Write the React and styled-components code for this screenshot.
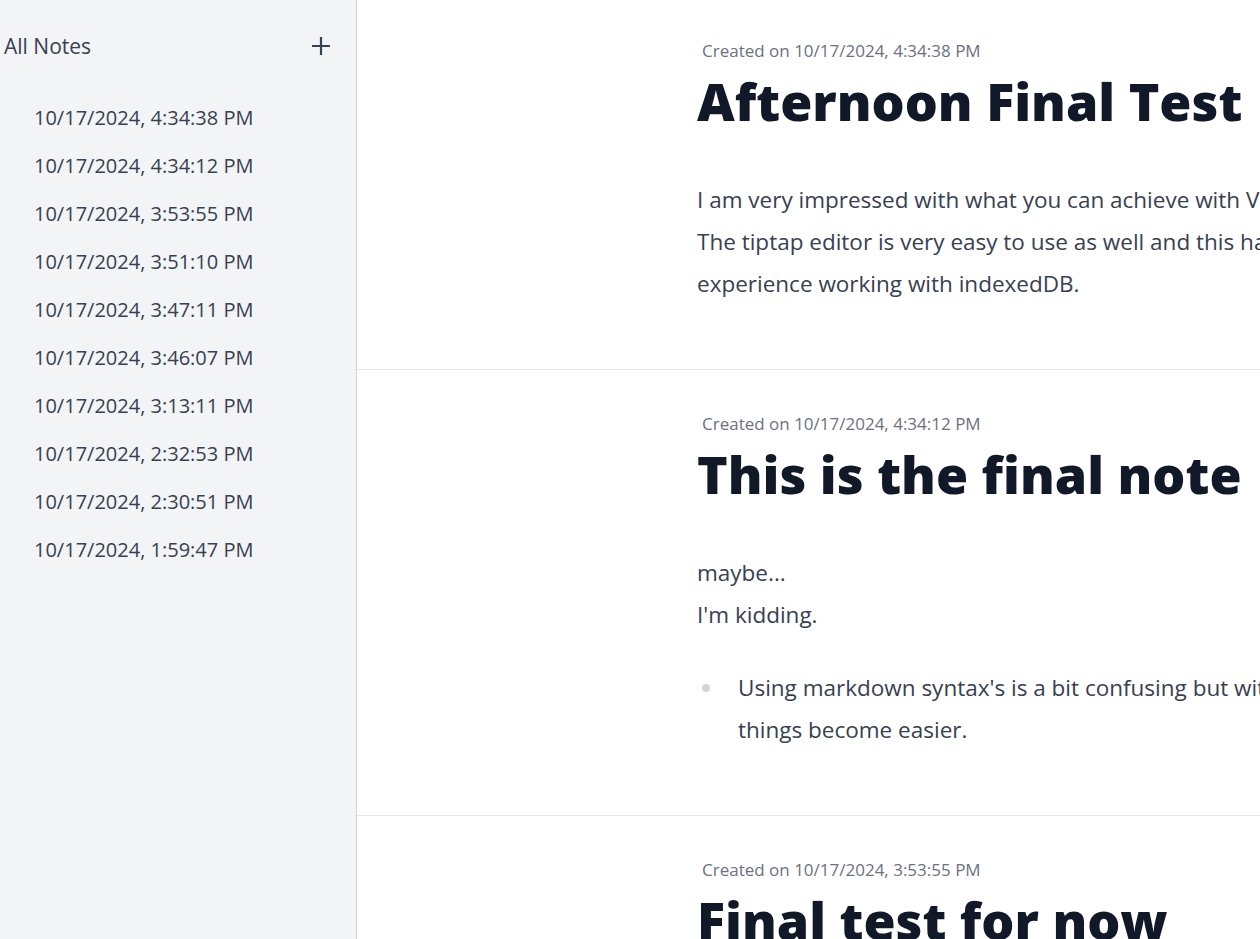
import React from "react";
import styled, { createGlobalStyle } from "styled-components";

const Global = createGlobalStyle`
  html, body { margin: 0; padding: 0; height: 100%; overflow: hidden; }
  body { font-family: "Open Sans", "Noto Sans", sans-serif; background: #fff; }
  #root { height: 100%; }
  * { box-sizing: border-box; }
`;

const Layout = styled.div`
  display: flex;
  height: 100vh;
  width: 100%;
`;

const Sidebar = styled.aside`
  flex: 0 0 357px;
  background: #f3f4f6;
  border-right: 1px solid #d1d5db;
  padding: 0 24px 0 4px;
`;

const SidebarHeader = styled.div`
  display: flex;
  align-items: center;
  justify-content: space-between;
  height: 92px;
`;

const SidebarTitle = styled.h2`
  margin: 0;
  font-size: 21px;
  font-weight: 500;
  color: #374151;
`;

const AddButton = styled.button`
  border: 0;
  background: none;
  padding: 0;
  width: 22px;
  height: 22px;
  display: flex;
  align-items: center;
  justify-content: center;
  color: #374151;
  cursor: pointer;
`;

const NoteList = styled.ul`
  list-style: none;
  margin: 2px 0 0;
  padding: 0 0 0 30px;
  display: flex;
  flex-direction: column;
`;

const NoteItem = styled.li`
  font-size: 20px;
  line-height: 48px;
  color: #374151;
`;

const Main = styled.main`
  flex: 1;
  overflow: hidden;
  min-width: 0;
`;

const Article = styled.article`
  border-bottom: 1px solid #e5e7eb;
  padding: 42px 0 64px 340px;
  &:first-child {
    padding-top: 39px;
  }
`;

const Meta = styled.div`
  font-size: 17px;
  line-height: 24px;
  color: #6b7280;
  padding-left: 5px;
`;

const Title = styled.h1`
  margin: 9px 0 0;
  font-size: 52px;
  line-height: 57px;
  font-weight: 800;
  color: #111827;
  white-space: nowrap;
`;

const Body = styled.div`
  margin-top: 50px;
  font-size: 22.5px;
  line-height: 42px;
  color: #374151;
  white-space: nowrap;
`;

const Para = styled.p`
  margin: 0;
`;

const Line = styled.span`
  display: block;
`;

const Bullets = styled.ul`
  margin: 31px 0 0;
  padding: 0 0 0 41px;
  list-style: none;
`;

const Bullet = styled.li`
  position: relative;
  &::before {
    content: "";
    position: absolute;
    left: -36px;
    top: 17px;
    width: 8px;
    height: 8px;
    border-radius: 50%;
    background: #d1d5db;
  }
`;

const notes = [
  "10/17/2024, 4:34:38 PM",
  "10/17/2024, 4:34:12 PM",
  "10/17/2024, 3:53:55 PM",
  "10/17/2024, 3:51:10 PM",
  "10/17/2024, 3:47:11 PM",
  "10/17/2024, 3:46:07 PM",
  "10/17/2024, 3:13:11 PM",
  "10/17/2024, 2:32:53 PM",
  "10/17/2024, 2:30:51 PM",
  "10/17/2024, 1:59:47 PM",
];

export default function App() {
  return (
    <>
      <Global />
      <Layout>
        <Sidebar>
          <SidebarHeader>
            <SidebarTitle>All Notes</SidebarTitle>
            <AddButton aria-label="New note">
              <svg width="20" height="20" viewBox="0 0 20 20" fill="none" stroke="currentColor" strokeWidth="2.2">
                <path d="M10 1v18M1 10h18" />
              </svg>
            </AddButton>
          </SidebarHeader>
          <NoteList>
            {notes.map((n) => (
              <NoteItem key={n}>{n}</NoteItem>
            ))}
          </NoteList>
        </Sidebar>
        <Main>
          <Article>
            <Meta>Created on 10/17/2024, 4:34:38 PM</Meta>
            <Title>Afternoon Final Test</Title>
            <Body>
              <Para>
                <Line>I am very impressed with what you can achieve with Vue and Nuxt.</Line>
                <Line>The tiptap editor is very easy to use as well and this has been a great</Line>
                <Line>experience working with indexedDB.</Line>
              </Para>
            </Body>
          </Article>
          <Article>
            <Meta>Created on 10/17/2024, 4:34:12 PM</Meta>
            <Title>This is the final note</Title>
            <Body>
              <Para>
                maybe...
                <br />
                I'm kidding.
              </Para>
              <Bullets>
                <Bullet>
                  <Line>Using markdown syntax's is a bit confusing but with practice,</Line>
                  <Line>things become easier.</Line>
                </Bullet>
              </Bullets>
            </Body>
          </Article>
          <Article>
            <Meta>Created on 10/17/2024, 3:53:55 PM</Meta>
            <Title>Final test for now</Title>
          </Article>
        </Main>
      </Layout>
    </>
  );
}
